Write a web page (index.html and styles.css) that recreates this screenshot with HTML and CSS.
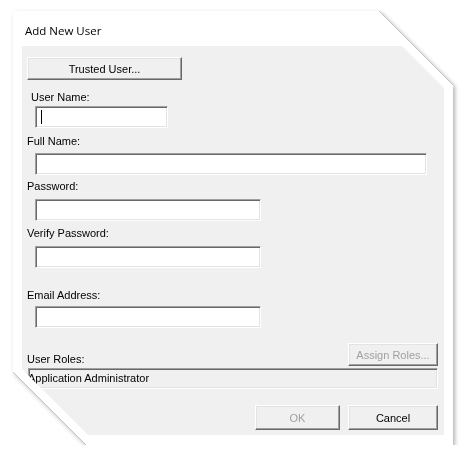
FILE: index.html
```html
<!DOCTYPE html>
<html lang="en">
<head>
    <meta charset="UTF-8">
    <meta name="viewport" content="width=device-width, initial-scale=1.0">
    <title>Add New User</title>
    <link rel="stylesheet" href="styles.css">
</head>
<body>
    <div class="shot">
        <div class="window">
            <div class="window-title">Add New User</div>

            <form class="dialog">
                <button type="button" class="btn btn-trusted">Trusted User...</button>

                <label class="lbl lbl-user" for="username">User Name:</label>
                <div class="field-wrap">
                    <input type="text" id="username" class="field field-user">
                    <span class="caret"></span>
                </div>

                <label class="lbl lbl-full" for="fullname">Full Name:</label>
                <input type="text" id="fullname" class="field field-full">

                <label class="lbl lbl-pass" for="password">Password:</label>
                <input type="password" id="password" class="field field-mid field-pass">

                <label class="lbl lbl-verify" for="verify">Verify Password:</label>
                <input type="password" id="verify" class="field field-mid field-verify">

                <label class="lbl lbl-email" for="email">Email Address:</label>
                <input type="text" id="email" class="field field-mid field-email">

                <div class="roles-row">
                    <span class="lbl">User Roles:</span>
                    <button type="button" class="btn btn-side" disabled>Assign Roles...</button>
                </div>
                <div class="roles-box">Application Administrator</div>

                <div class="actions">
                    <button type="submit" class="btn btn-ok" disabled>OK</button>
                    <button type="button" class="btn btn-cancel">Cancel</button>
                </div>
            </form>
        </div>
    </div>
</body>
</html>
```

FILE: styles.css
```css
* {
    margin: 0;
    padding: 0;
    box-sizing: border-box;
}

body {
    background: #fff;
    font-family: 'Liberation Sans', Arial, sans-serif;
    font-size: 11px;
    color: #000;
}

.shot {
    padding: 11px 0 0 13px;
    filter: drop-shadow(0 0 0.7px rgba(0,0,0,0.75)) drop-shadow(2px 2px 2px rgba(0,0,0,0.3));
}

.window {
    width: 440px;
    height: 434px;
    background: #fff;
    clip-path: polygon(0 0, calc(100% - 74px) 0, 100% 74px, 100% 100%, 73px 100%, 0 calc(100% - 73px));
    display: flex;
    flex-direction: column;
}

.window-title {
    height: 35px;
    padding: 12px 0 0 12px;
    font-family: 'Open Sans', 'Noto Sans', sans-serif;
    font-size: 11.5px;
    line-height: 15px;
    color: #000;
}

.dialog {
    margin: 0 9px;
    width: 422px;
    height: 389px;
    background: #f0f0f0;
    clip-path: polygon(0 0, calc(100% - 42px) 0, 100% 42px, 100% 100%, 66px 100%, 0 calc(100% - 66px));
    display: flex;
    flex-direction: column;
    align-items: flex-start;
}

.lbl {
    display: block;
    height: 13px;
    line-height: 13px;
    margin-left: 5px;
    white-space: nowrap;
}

.lbl-user { margin: 11px 0 0 9px; }
.lbl-full { margin-top: 7px; }
.lbl-pass { margin-top: 5px; }
.lbl-verify { margin-top: 6px; }
.lbl-email { margin-top: 21px; }

.field {
    display: block;
    height: 22px;
    margin-left: 13px;
    background: #fff;
    border: 1px solid;
    border-color: #a0a0a0 #fff #fff #a0a0a0;
    box-shadow: inset 1px 1px #696969, inset -1px -1px #e3e3e3;
    font: inherit;
    outline: none;
}

.field-wrap {
    position: relative;
    margin-top: 2px;
}

.field-user { width: 133px; }

.caret {
    position: absolute;
    left: 19px;
    top: 4px;
    width: 1px;
    height: 14px;
    background: #000;
}

.field-full { width: 392px; margin-top: 5px; }
.field-mid { width: 226px; }
.field-pass { margin-top: 6px; }
.field-verify { margin-top: 6px; }
.field-email { margin-top: 4px; }

.btn {
    height: 23px;
    background: #f0f0f0;
    border: 1px solid;
    border-color: #fff #696969 #696969 #fff;
    box-shadow: inset -1px -1px #a0a0a0, inset 1px 1px #e3e3e3;
    font: inherit;
    color: #000;
    text-align: center;
}

.btn:disabled {
    color: #a0a0a0;
}

.btn-trusted {
    width: 155px;
    margin: 11px 0 0 5px;
}

.roles-row {
    width: 416px;
    margin-top: 15px;
    display: flex;
    justify-content: space-between;
    align-items: flex-end;
}

.btn-side {
    width: 90px;
}

.roles-box {
    width: 410px;
    height: 21px;
    margin: 2px 0 0 6px;
    padding: 3px 0 0 0;
    text-indent: -1px;
    overflow: hidden;
    white-space: nowrap;
    border: 1px solid;
    border-color: #a0a0a0 #fff #fff #a0a0a0;
    box-shadow: inset 1px 1px #696969, inset -1px -1px #e3e3e3;
}

.actions {
    width: 416px;
    margin-top: 16px;
    display: flex;
    justify-content: flex-end;
    gap: 8px;
}

.btn-ok {
    width: 85px;
    height: 25px;
}

.btn-cancel {
    width: 90px;
    height: 25px;
}
```
